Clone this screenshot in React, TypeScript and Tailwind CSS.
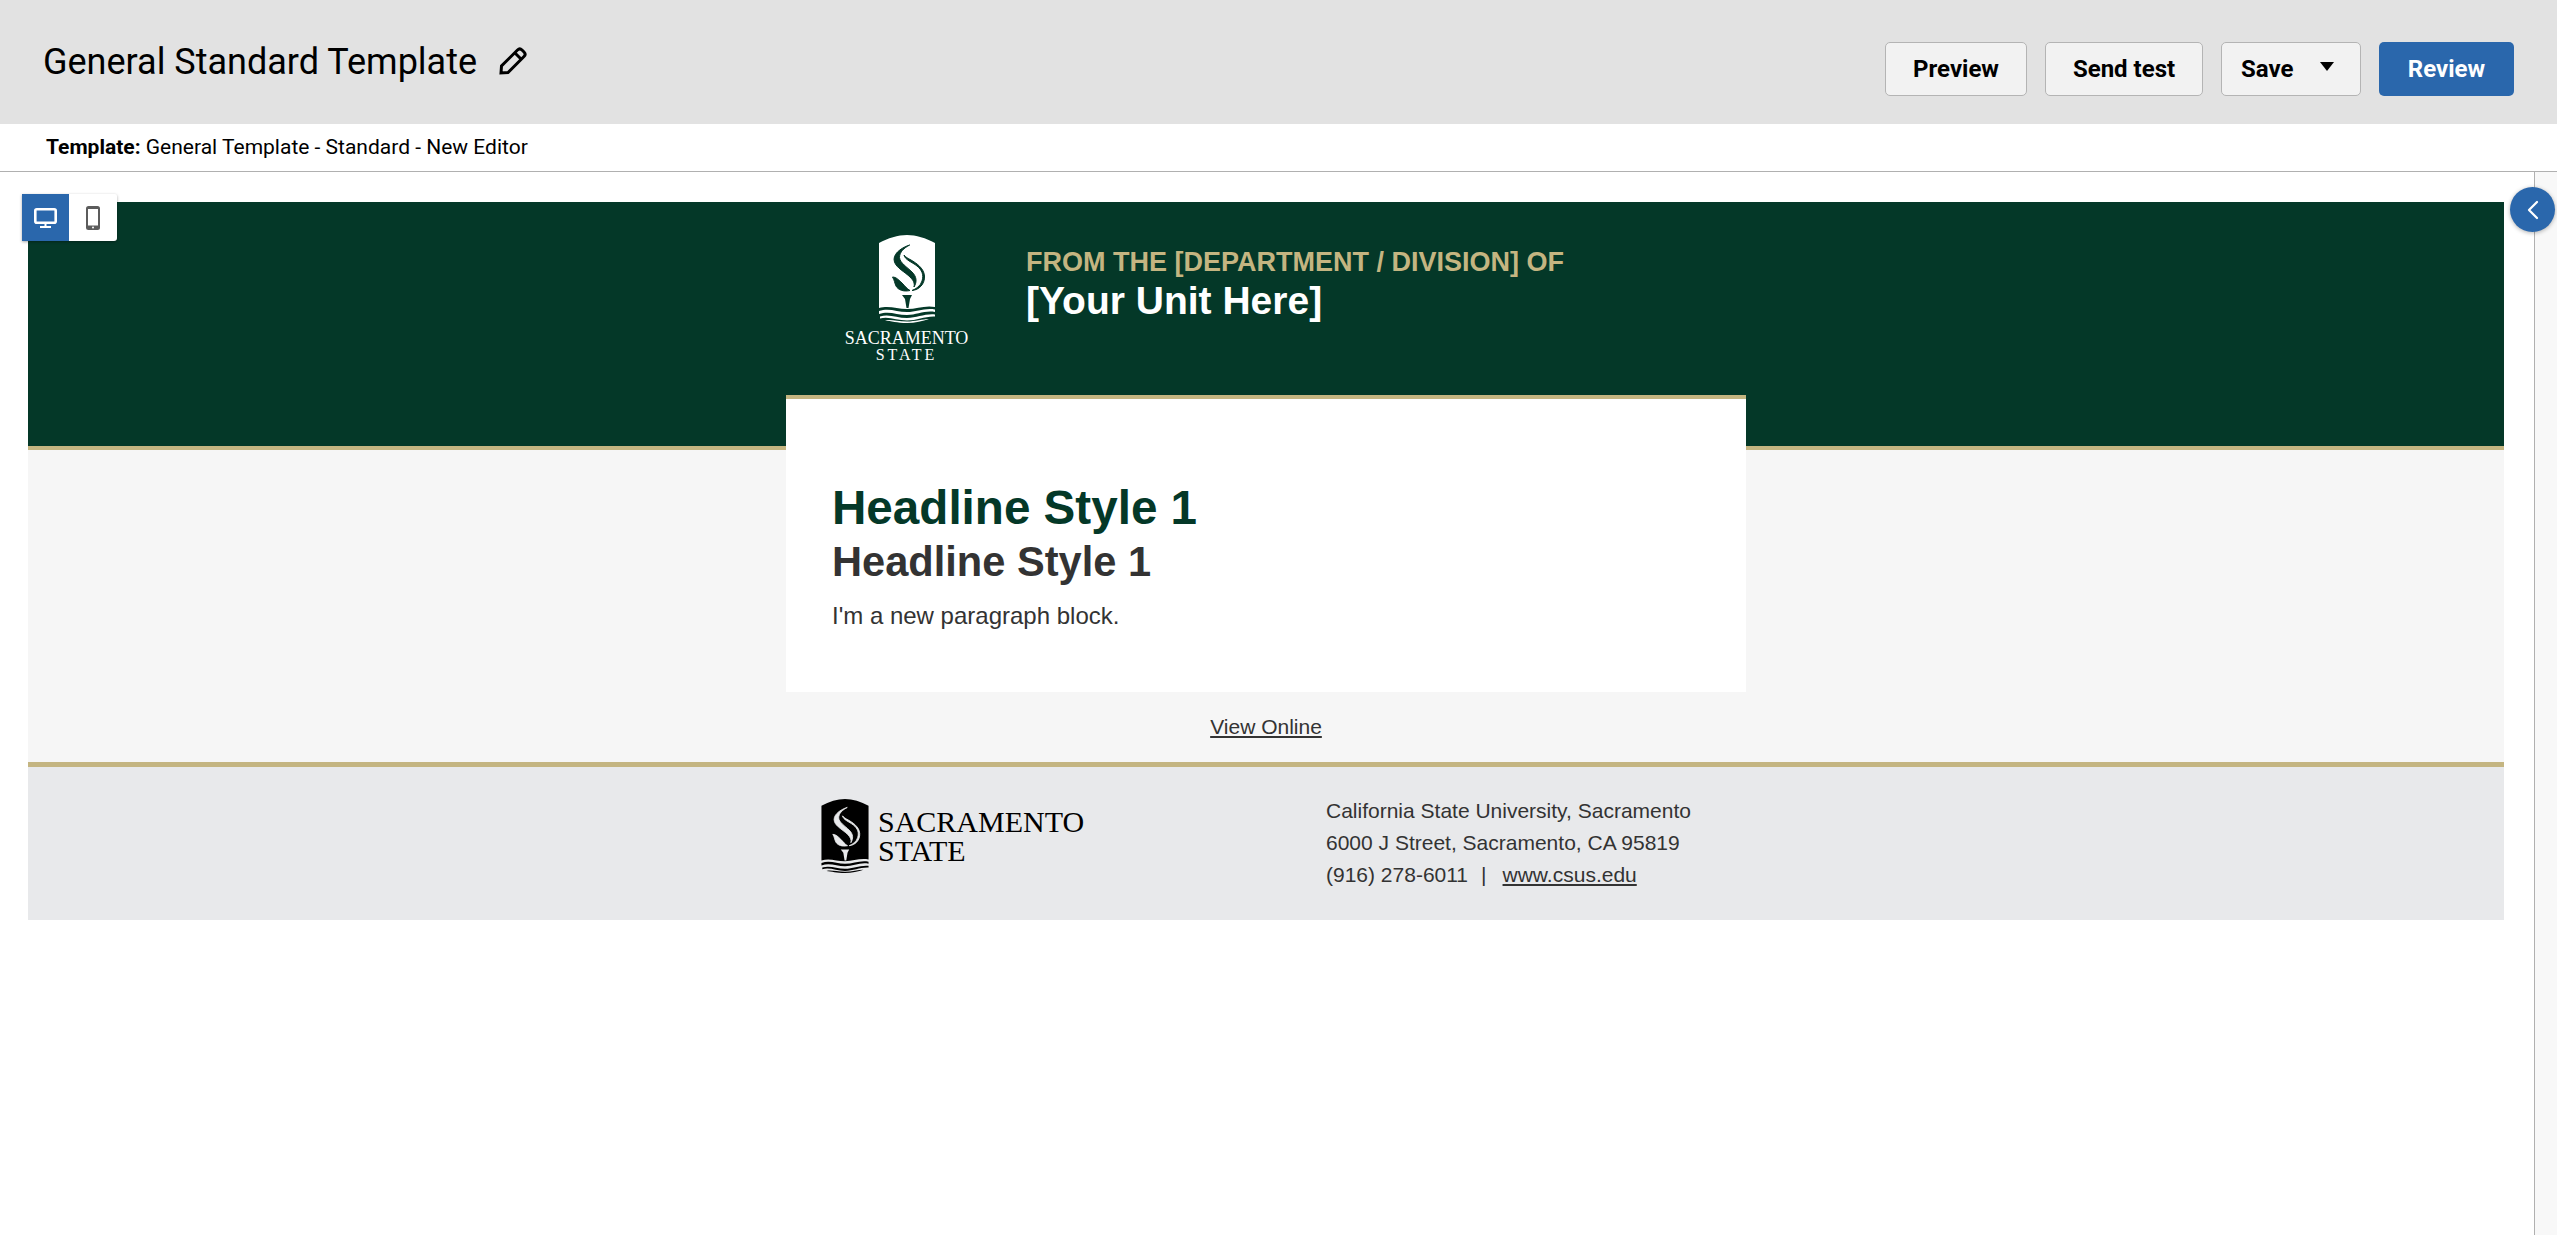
import React from 'react';
import { ChevronLeft } from 'lucide-react';

const chromeFont = { fontFamily: 'Roboto, sans-serif' };
const serifFont = { fontFamily: '"Liberation Serif", serif' };

// Torch mark, used in both the header (white) and the footer (black)
const TorchMark: React.FC<{ shield: string; cut: string; className?: string }> = ({ shield, cut, className }) => (
    <svg viewBox="0 0 56 88" className={className}>
        <path d="M0 8 C9 3 19 0 28 0 C37 0 47 3 56 8 L56 72 C46 70 38 74 28 74 C18 74 10 70 0 73 Z" fill={shield} />
        {/* flame */}
        <g fill={cut} stroke={cut} strokeWidth="1">
            <path d="M30.700 10 C21 13 13 20 15.500 27 C17.500 33 26 37 31 42 C34 45 36 48 35 52 C38 47 38 42 33 37 C28 32 21 28 20.500 22.500 C20.500 17 25 13 30.700 10 Z" />
            <path d="M25 20 C26 25 33 27 38 31 C43 35 45 40 43 46 C41.500 51 37 54 33 55.500 C40 55 46 49 45.500 41 C45 33 37 28 32 25 C29 23.500 26.500 22 25 20 Z" />
            <path d="M13.500 42 C17 42 20 45 23 48 C26 51 28 54 31 55.500 C25 57 19 55 17 51 C15.500 48 15.500 45 13.500 42 Z" />
        </g>
        {/* torch */}
        <path d="M23 60 L33 60 L31 64 L29.500 73 L27.500 73 L26 64 Z" fill={cut} />
        {/* water */}
        <path d="M0 76 C10 72.500 18 77 28 77 C38 77 46 72.500 56 74.500 L56 77 C46 75 38 80 28 80 C18 80 10 75.500 0 79 Z" fill={shield} />
        <path d="M1 81.500 C10 78.500 18 83 28 83 C38 83 46 78.500 56 79.500 L56 81.500 C46 81 38 85.500 28 85.500 C18 85.500 10 81 1 83.500 Z" fill={shield} />
        <path d="M6 85.500 C12 84 18 86.500 28 86.500 C36 86.500 44 84 50 84 C44 86 36 88 28 88 C18 88 12 86 6 85.500 Z" fill={shield} />
    </svg>
);

const ChromeButton: React.FC<{ className: string; children: React.ReactNode }> = ({ className, children }) => (
    <button className={`h-[54px] rounded-[5px] border border-[#b4b4b4] bg-[#f2f2f2] text-[24px] font-bold text-black flex items-center ${className}`}>
        {children}
    </button>
);

export default function App() {
    return (
        <div className="h-[1235px] w-[2557px] overflow-hidden bg-white flex flex-col" style={chromeFont}>
            {/* Top bar */}
            <div className="h-[124px] shrink-0 bg-[#e2e2e2] flex justify-between pl-[43px] pr-[43px]">
                <div className="flex items-start pt-[38px] gap-[22px]">
                    <h1 className="text-[36px] leading-[44px] text-black pt-[2px]">General Standard Template</h1>
                    <svg viewBox="0 0 28 28" className="w-[28px] h-[28px] mt-[9px]" fill="none" stroke="black" strokeWidth="3">
                        <path d="M2 26 L2.500 19 L18.500 3 C20 1.500 21.500 1.500 23 3 L25 5 C26.500 6.500 26.500 8 25 9.500 L9 25.500 Z" />
                        <path d="M16 6 L22.500 12.500" />
                    </svg>
                </div>
                <div className="flex items-start pt-[42px] gap-[18px]">
                    <ChromeButton className="w-[142px] justify-center">Preview</ChromeButton>
                    <ChromeButton className="w-[158px] justify-center">Send test</ChromeButton>
                    <ChromeButton className="w-[140px] pl-[19px]">
                        Save
                        <svg viewBox="0 0 14 9" className="w-[14px] h-[9px] ml-[27px] mb-[5px]" fill="black"><path d="M0 0 H14 L7 9 Z" /></svg>
                    </ChromeButton>
                    <button className="h-[54px] w-[135px] rounded-[5px] bg-[#2a67ac] text-[24px] font-bold text-white">Review</button>
                </div>
            </div>

            {/* Template line */}
            <div className="h-[48px] shrink-0 border-b border-[#b0b0b0] pl-[46px] flex items-center text-[21px] text-black">
                <span><b>Template:</b> General Template - Standard - New Editor</span>
            </div>

            {/* Canvas */}
            <div className="relative flex flex-1 min-h-0">
                <div className="flex-1 pl-[28px] pr-[30px] pt-[30px]" style={{ fontFamily: '"Liberation Sans", Arial, sans-serif' }}>
                    <div className="absolute left-[22px] top-[22px] z-10 flex h-[47px] w-[95px] rounded-br-[3px] rounded-tr-[2px] bg-white shadow-[0_1px_3px_rgba(0,0,0,0.35)]">
                        <div className="flex h-full w-[47px] items-center justify-center bg-[#2a67ac]">
                            <svg viewBox="0 0 23 20" className="w-[23px] h-[20px]" fill="none" stroke="white">
                                <rect x="1.300" y="1.300" width="20.400" height="13.400" rx="1.500" strokeWidth="2.600" />
                                <path d="M11.500 16 V18.500 M6 19 H17" strokeWidth="2" />
                            </svg>
                        </div>
                        <div className="flex h-full w-[48px] items-center justify-center">
                            <svg viewBox="0 0 14 24" className="w-[14px] h-[24px]">
                                <rect width="14" height="24" rx="2.500" fill="#5c5c5c" />
                                <rect x="2" y="3" width="10" height="16.500" fill="white" />
                                <circle cx="7" cy="21.600" r="1" fill="white" />
                            </svg>
                        </div>
                    </div>

                    {/* Email */}
                    <div className="bg-[#043828] border-b-4 border-[#c4b581] h-[248px]">
                        <div className="w-[960px] ml-[758px] flex">
                            <div className="w-[123px] ml-[59px] pt-[33px] flex flex-col items-center shrink-0">
                                <TorchMark shield="white" cut="#043828" className="w-[56px] h-[88px] shrink-0" />
                                <div className="text-white text-[18px] leading-[17px] mt-[7px] whitespace-nowrap" style={serifFont}>SACRAMENTO</div>
                                <div className="text-white text-[16px] leading-[16px] tracking-[3px] whitespace-nowrap" style={serifFont}>STATE</div>
                            </div>
                            <div className="ml-[58px] pt-[44px] font-bold">
                                <div className="text-[#c4b581] text-[27px] leading-[32px]">FROM THE [DEPARTMENT / DIVISION] OF</div>
                                <div className="text-white text-[39px] leading-[46px]">[Your Unit Here]</div>
                            </div>
                        </div>
                    </div>

                    <div className="bg-[#f6f6f6] h-[312px]">
                        <div className="relative -top-[55px] w-[960px] ml-[758px] h-[297px] border-t-4 border-[#c4b581] bg-white pl-[46px] pt-[82px]">
                            <h2 className="text-[47.600px] leading-[54px] font-bold text-[#043828]">Headline Style 1</h2>
                            <h3 className="text-[41.600px] leading-[52px] font-bold text-[#333333] mt-[1px]">Headline Style 1</h3>
                            <p className="mt-[13px] text-[24px] leading-[30px] text-[#333333]">I'm a new paragraph block.</p>
                        </div>
                        <div className="relative -top-[55px] pt-[23px] text-center text-[21px] leading-[24px] text-[#333333]">
                            <span className="underline">View Online</span>
                        </div>
                    </div>

                    <div className="bg-[#e8e9eb] border-t-[5px] border-[#c4b581] h-[158px]">
                        <div className="w-[960px] ml-[758px] flex pt-[32px]">
                            <div className="w-[540px] pl-[35px] flex">
                                <TorchMark shield="black" cut="#e8e9eb" className="w-[48px] h-[74px] shrink-0" />
                                <div className="ml-[9px] text-[30px] leading-[29px] text-black pt-[8px]" style={serifFont}>
                                    <div>SACRAMENTO</div>
                                    <div>STATE</div>
                                </div>
                            </div>
                            <div className="text-[21px] leading-[32px] text-[#333333] -mt-[4px]">
                                <div>California State University, Sacramento</div>
                                <div>6000 J Street, Sacramento, CA 95819</div>
                                <div className="flex">
                                    <span>(916) 278-6011</span>
                                    <span className="ml-[13px]">|</span>
                                    <span className="ml-[16px] underline">www.csus.edu</span>
                                </div>
                            </div>
                        </div>
                    </div>
                </div>

                {/* Right rail */}
                <div className="w-[23px] shrink-0 border-l border-[#b0b0b0] bg-[#f8f8f8]" />
                <button className="absolute right-[2px] top-[15px] flex h-[45px] w-[45px] items-center justify-center rounded-full bg-[#2a67ac] shadow-[0_1px_4px_rgba(0,0,0,0.3)]">
                    <ChevronLeft className="w-[32px] h-[32px] text-white" strokeWidth={1.700} />
                </button>
            </div>
        </div>
    );
}
